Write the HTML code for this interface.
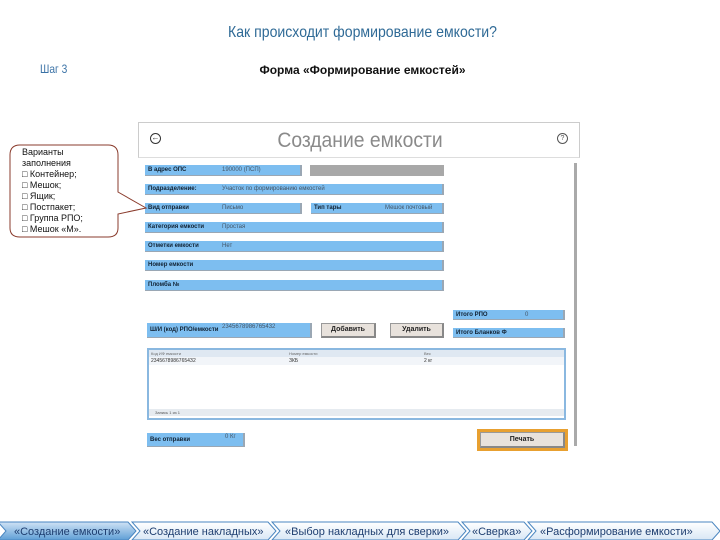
<!DOCTYPE html>
<html><head><meta charset="utf-8"><style>
*{margin:0;padding:0;box-sizing:border-box}
body{width:720px;height:540px;background:#fff;position:relative;overflow:hidden;font-family:"Liberation Sans","DejaVu Sans",sans-serif}
.a{position:absolute}
.f{position:absolute;background:#7dbef0;border-right:2px solid #9aa7b4;border-bottom:1px solid #9aa7b4;font-size:6px;color:#123;line-height:11px;padding-left:3px;font-weight:bold}
.f span{position:absolute;left:77px;font-weight:normal;color:#456}
.btn{position:absolute;background:#e8e2dc;border:1px solid #999;border-right:2px solid #888;border-bottom:2px solid #888;font-size:7px;font-weight:bold;text-align:center;line-height:12px;color:#222}
.cl{font-size:9px;line-height:11px;color:#111}
</style></head><body>
<div class="a" style="left:0;top:24px;width:725px;text-align:center;font-size:16px;color:#2f6a96;transform:scaleX(.88)">Как происходит формирование емкости?</div>
<div class="a" style="left:40px;top:62px;font-size:12px;color:#3a72a6;transform:scaleX(.85);transform-origin:left">Шаг 3</div>
<div class="a" style="left:230px;top:63px;width:265px;text-align:center;font-size:12px;font-weight:bold;color:#111">Форма «Формирование емкостей»</div>

<!-- form -->
<div class="a" style="left:138px;top:122px;width:442px;height:36px;border:1px solid #ccc;border-bottom:1px solid #ddd"></div>
<div class="a" style="left:150px;top:133px;width:11px;height:11px;border:1.3px solid #333;border-radius:50%;font-size:8px;line-height:8px;text-align:center;color:#333">←</div>
<div class="a" style="left:557px;top:133px;width:11px;height:11px;border:1px solid #555;border-radius:50%;font-size:7px;line-height:9px;text-align:center;color:#555">?</div>
<div class="a" style="left:200px;top:129px;width:320px;text-align:center;font-size:21px;color:#8a8a8a;transform:scaleX(.92)">Создание емкости</div>
<div class="a" style="left:574px;top:163px;width:3px;height:283px;background:#aaa"></div>

<div class="f" style="left:145px;top:165px;width:157px;height:11px">В адрес ОПС<span>190000 (ПСП)</span></div>
<div class="a" style="left:310px;top:165px;width:134px;height:11px;background:#a8a8a8"></div>
<div class="f" style="left:145px;top:184px;width:299px;height:11px">Подразделение:<span>Участок по формированию емкостей</span></div>
<div class="f" style="left:145px;top:203px;width:157px;height:11px">Вид отправки<span>Письмо</span></div>
<div class="f" style="left:311px;top:203px;width:133px;height:11px">Тип тары<span style="left:74px">Мешок почтовый</span></div>
<div class="f" style="left:145px;top:222px;width:299px;height:11px">Категория емкости<span>Простая</span></div>
<div class="f" style="left:145px;top:241px;width:299px;height:11px">Отметки емкости<span>Нет</span></div>
<div class="f" style="left:145px;top:260px;width:299px;height:11px">Номер емкости</div>
<div class="f" style="left:145px;top:280px;width:299px;height:11px">Пломба №</div>

<div class="f" style="left:453px;top:310px;width:112px;height:10px;line-height:10px">Итого РПО<span style="left:72px">0</span></div>
<div class="f" style="left:453px;top:328px;width:112px;height:10px;line-height:10px">Итого Бланков Ф</div>
<div class="f" style="left:147px;top:323px;width:165px;height:15px;line-height:15px">Ш/И (код) РПО/емкости<span style="left:75px;line-height:9px">2345678986765432</span></div>
<div class="btn" style="left:321px;top:323px;width:55px;height:15px">Добавить</div>
<div class="btn" style="left:390px;top:323px;width:54px;height:15px">Удалить</div>

<div class="a" style="left:147px;top:348px;width:419px;height:72px;border:2px solid #8ab8e0;background:#fff"></div>
<div class="a" style="left:149px;top:350px;width:415px;height:7px;background:#dfe8f2;font-size:4px;color:#666;line-height:7px;padding-left:2px">Код ИФ емкости<span style="position:absolute;left:140px">Номер емкости</span><span style="position:absolute;left:275px">Вес</span></div>
<div class="a" style="left:149px;top:357px;width:415px;height:8px;background:#f2f5f9;font-size:5px;color:#333;line-height:8px;padding-left:2px">23456789867654З2<span style="position:absolute;left:140px">ЗКБ</span><span style="position:absolute;left:275px">2 кг</span></div>
<div class="a" style="left:149px;top:409px;width:415px;height:7px;background:#e6ebf0;font-size:4px;color:#555;line-height:7px;padding-left:6px">Запись 1 из 1</div>

<div class="f" style="left:147px;top:433px;width:98px;height:14px;line-height:14px">Вес отправки<span style="left:78px;line-height:8px">0 Кг</span></div>
<div class="a" style="left:477px;top:429px;width:91px;height:22px;background:#e8a030;padding:3px"><div class="btn" style="position:relative;width:100%;height:100%;line-height:13px">Печать</div></div>

<!-- callout -->
<svg class="a" style="left:0;top:140px" width="150" height="102">
<path d="M20 5 H108 Q118 5 118 15 V52 L146 68 L118 74 V88 Q118 97 108 97 H20 Q10 97 10 88 V15 Q10 5 20 5 Z" fill="#fff" stroke="#8a3b2c" stroke-width="1"/>
</svg>
<div class="a cl" style="left:22px;top:147px">Варианты<br>заполнения<br>□ Контейнер;<br>□ Мешок;<br>□ Ящик;<br>□ Постпакет;<br>□ Группа РПО;<br>□ Мешок «М».</div>

<!-- breadcrumbs -->
<svg class="a" style="left:0;top:520px" width="720" height="20">
<defs><linearGradient id="b" x1="0" y1="0" x2="0" y2="1"><stop offset="0" stop-color="#cfe2f5"/><stop offset="1" stop-color="#5f9fd6"/></linearGradient>
<linearGradient id="w" x1="0" y1="0" x2="0" y2="1"><stop offset="0" stop-color="#fff"/><stop offset="1" stop-color="#d8e7f5"/></linearGradient></defs>
<polygon points="-2,2 128,2 136,11 128,20 -2,20 6,11" fill="url(#b)" stroke="#4a86c0"/>
<polygon points="132,2 268,2 276,11 268,20 132,20 140,11" fill="url(#w)" stroke="#4a86c0"/>
<polygon points="272,2 458,2 466,11 458,20 272,20 280,11" fill="url(#w)" stroke="#4a86c0"/>
<polygon points="462,2 524,2 532,11 524,20 462,20 470,11" fill="url(#w)" stroke="#4a86c0"/>
<polygon points="528,2 712,2 720,11 712,20 528,20 536,11" fill="url(#w)" stroke="#4a86c0"/>
</svg>
<div class="a" style="left:0;top:526px;font-size:11px;color:#1e3e70;white-space:nowrap;line-height:12px">
<span class="a" style="left:14px">«Создание емкости»</span>
<span class="a" style="left:143px">«Создание накладных»</span>
<span class="a" style="left:285px">«Выбор накладных для сверки»</span>
<span class="a" style="left:472px">«Сверка»</span>
<span class="a" style="left:540px">«Расформирование емкости»</span>
</div>
</body></html>
